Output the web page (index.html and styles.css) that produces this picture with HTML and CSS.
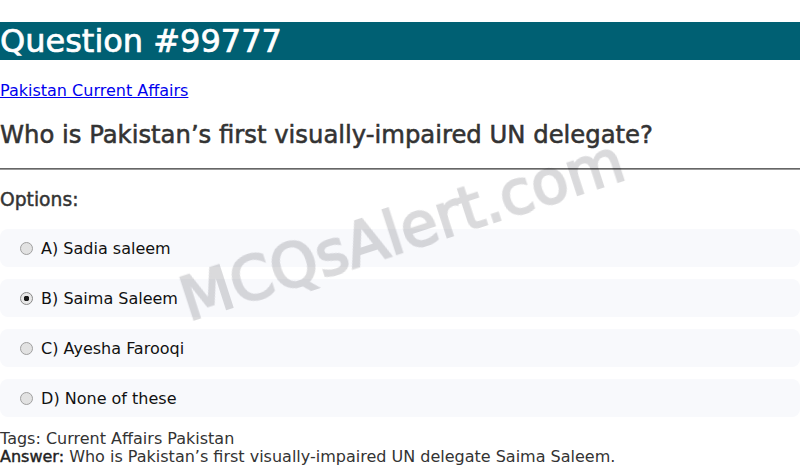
FILE: index.html
```html
<!DOCTYPE html>
<html>
<head>
<meta charset="utf-8">
<link rel="stylesheet" href="styles.css">
</head>
<body>
<h1 class="title">Question #99777</h1>
<p class="cat"><a href="#">Pakistan Current Affairs</a></p>
<h2 class="question">Who is Pakistan’s first visually-impaired UN delegate?</h2>
<hr class="rule">
<h3 class="opts-head">Options:</h3>
<div class="options">
  <label class="option"><input type="radio" name="q"> A) Sadia saleem</label>
  <label class="option"><input type="radio" name="q" checked> B) Saima Saleem</label>
  <label class="option"><input type="radio" name="q"> C) Ayesha Farooqi</label>
  <label class="option"><input type="radio" name="q"> D) None of these</label>
</div>
<div class="meta">
  <div class="tags">Tags: Current Affairs Pakistan</div>
  <div class="answer"><span class="answer-label">Answer:</span> Who is Pakistan’s first visually-impaired UN delegate Saima Saleem.</div>
</div>
<div class="watermark">MCQsAlert.com</div>
</body>
</html>
```
FILE: styles.css
```css
html, body {
  margin: 0;
  padding: 0;
  font-family: "DejaVu Sans", sans-serif;
  background: #fff;
  color: #333;
  overflow: hidden;
}
.title {
  font-size: 32px;
  margin: 21.8px 0 21.4px;
  background: #006073;
  color: #fff;
  font-weight: normal;
  -webkit-text-stroke: 0.7px #fff;
}
.cat {
  margin: 16px 0;
  font-size: 16px;
}
.cat a {
  color: #0000ee;
}
.question {
  font-size: 24.3px;
  margin: 19.9px 0 19.2px;
  font-weight: normal;
  color: #333;
  -webkit-text-stroke: 0.55px #333;
}
.rule {
  margin: 0;
  border: 0;
  border-top: 1px solid #666;
  border-bottom: 1px solid #999;
}
.opts-head {
  font-size: 18.72px;
  margin: 18.6px 0 19.5px;
  font-weight: normal;
  color: #333;
  -webkit-text-stroke: 0.45px #333;
}
.options {
  display: flex;
  flex-direction: column;
  gap: 12px;
}
.option {
  display: flex;
  align-items: center;
  background: #f8f9fc;
  border-radius: 8px;
  padding: 11px 15px 9px;
  height: 18px;
  line-height: 18px;
  font-size: 16px;
  color: #111;
  white-space: pre;
}
.option input {
  appearance: none;
  -webkit-appearance: none;
  margin: 0 3px 1px 5px;
  width: 13px;
  height: 13px;
  border-radius: 50%;
  border: 1px solid #a0a0a0;
  background: #e2e2e2;
  box-sizing: border-box;
  flex: none;
}
.option input:checked {
  background: radial-gradient(circle, #1a1a1a 0 2.6px, #e8e8e8 3px 100%);
  border-color: #888;
}
.meta {
  margin-top: 12.5px;
  font-size: 16px;
  color: #333;
  line-height: 18px;
}
.answer-label {
  color: #222;
  -webkit-text-stroke: 0.4px #222;
}
.watermark {
  position: fixed;
  left: 402px;
  top: 230px;
  transform: translate(-50%, -50%) rotate(-18deg);
  font-size: 60px;
  font-weight: normal;
  color: #dadadc;
  -webkit-text-stroke: 2.2px #dadadc;
  mix-blend-mode: multiply;
  white-space: nowrap;
  pointer-events: none;
}
```
